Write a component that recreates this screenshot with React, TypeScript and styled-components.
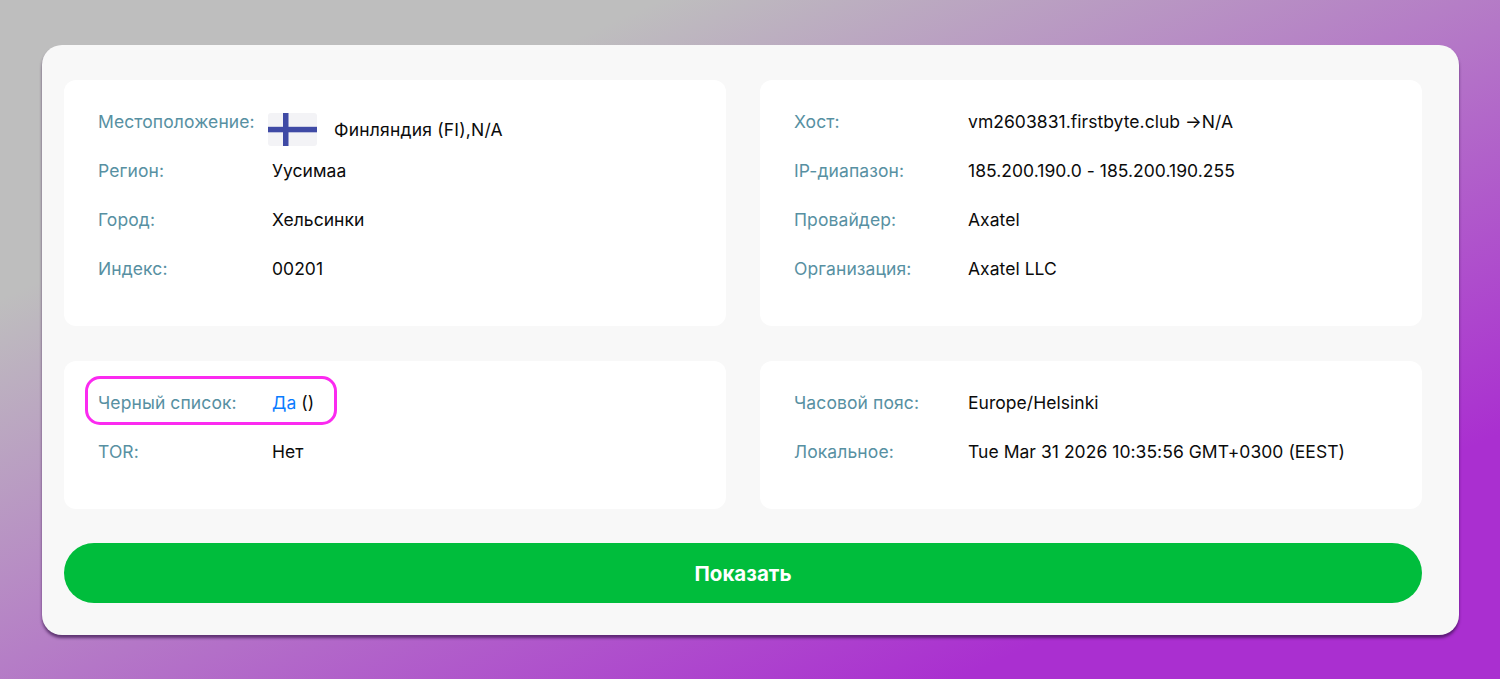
import React from "react";
import styled, { createGlobalStyle } from "styled-components";

const Global = createGlobalStyle`
  html, body { margin: 0; padding: 0; height: 100%; }
  #root { height: 100%; }
  body { font-family: Inter, "Noto Sans", sans-serif; }
`;

const Page = styled.div`
  box-sizing: border-box;
  height: 679px;
  padding: 45px 41px 44px 42px;
  overflow: hidden;
  background: linear-gradient(to bottom right, #bebebe 22%, #aa2fd0 82%);
`;

const Card = styled.main`
  box-sizing: border-box;
  height: 590px;
  padding: 35px 37px 32px 22px;
  background: #f8f8f8;
  border-radius: 20px;
  box-shadow: 0 3px 3px rgba(50, 15, 70, 0.65);
  display: flex;
  flex-direction: column;
`;

const Grid = styled.div`
  display: grid;
  grid-template-columns: 662px 662px;
  grid-template-rows: 246px 148px;
  column-gap: 34px;
  row-gap: 35px;
`;

const Panel = styled.section`
  box-sizing: border-box;
  padding: 17px 34px 33px;
  background: #fff;
  border-radius: 12px;
`;

const Row = styled.div`
  position: relative;
  height: 49px;
  padding-top: 13px;
  box-sizing: border-box;
  display: flex;
  align-items: flex-start;
  font-size: 17.5px;
  line-height: 24px;
`;

const Label = styled.span`
  flex: 0 0 174px;
  color: #5790a2;
  margin-top: -0.5px;
  letter-spacing: 0.1px;
`;

const Value = styled.span`
  color: #0b0b0b;
  white-space: nowrap;
  letter-spacing: 0.04px;
`;

const FlagValue = styled.span`
  display: flex;
  align-items: center;
  margin: 3px 0 0 -4px;
  gap: 17px;
  color: #0b0b0b;
  white-space: nowrap;
  letter-spacing: 0.2px;
`;

const FlagSvg = styled.svg`
  display: block;
  width: 49px;
  height: 33px;
  border-radius: 3px;
`;

const Link = styled.span`
  color: #0a7cff;
`;

const Highlight = styled.div`
  position: absolute;
  left: -13px;
  top: -2px;
  width: 252px;
  height: 49px;
  box-sizing: border-box;
  border: 3px solid #fb2af0;
  border-radius: 15px;
`;

const ShowButton = styled.button`
  margin-top: 34px;
  height: 60px;
  width: 1358px;
  border: 0;
  border-radius: 30px;
  background: #00bd3c;
  color: #fff;
  font-family: inherit;
  font-size: 20.5px;
  font-weight: 700;
`;

const Flag = () => (
  <FlagSvg viewBox="0 0 49 33" aria-hidden="true">
    <rect width="49" height="33" fill="#f3f3f6" />
    <rect x="15" width="5.5" height="33" fill="#3f4aa5" />
    <rect y="13.8" width="49" height="5.5" fill="#3f4aa5" />
  </FlagSvg>
);

export default function App() {
  return (
    <Page>
      <Global />
      <Card>
        <Grid>
          <Panel>
            <Row>
              <Label>Местоположение:</Label>
              <FlagValue>
                <Flag />
                Финляндия (FI),N/A
              </FlagValue>
            </Row>
            <Row><Label>Регион:</Label><Value>Уусимаа</Value></Row>
            <Row><Label>Город:</Label><Value>Хельсинки</Value></Row>
            <Row><Label>Индекс:</Label><Value>00201</Value></Row>
          </Panel>
          <Panel>
            <Row><Label>Хост:</Label><Value>vm2603831.firstbyte.club →N/A</Value></Row>
            <Row><Label>IP-диапазон:</Label><Value>185.200.190.0 - 185.200.190.255</Value></Row>
            <Row><Label>Провайдер:</Label><Value>Axatel</Value></Row>
            <Row><Label>Организация:</Label><Value>Axatel LLC</Value></Row>
          </Panel>
          <Panel>
            <Row>
              <Highlight />
              <Label>Черный список:</Label>
              <Value><Link>Да</Link> ()</Value>
            </Row>
            <Row><Label>TOR:</Label><Value>Нет</Value></Row>
          </Panel>
          <Panel>
            <Row><Label>Часовой пояс:</Label><Value>Europe/Helsinki</Value></Row>
            <Row><Label>Локальное:</Label><Value>Tue Mar 31 2026 10:35:56 GMT+0300 (EEST)</Value></Row>
          </Panel>
        </Grid>
        <ShowButton>Показать</ShowButton>
      </Card>
    </Page>
  );
}
